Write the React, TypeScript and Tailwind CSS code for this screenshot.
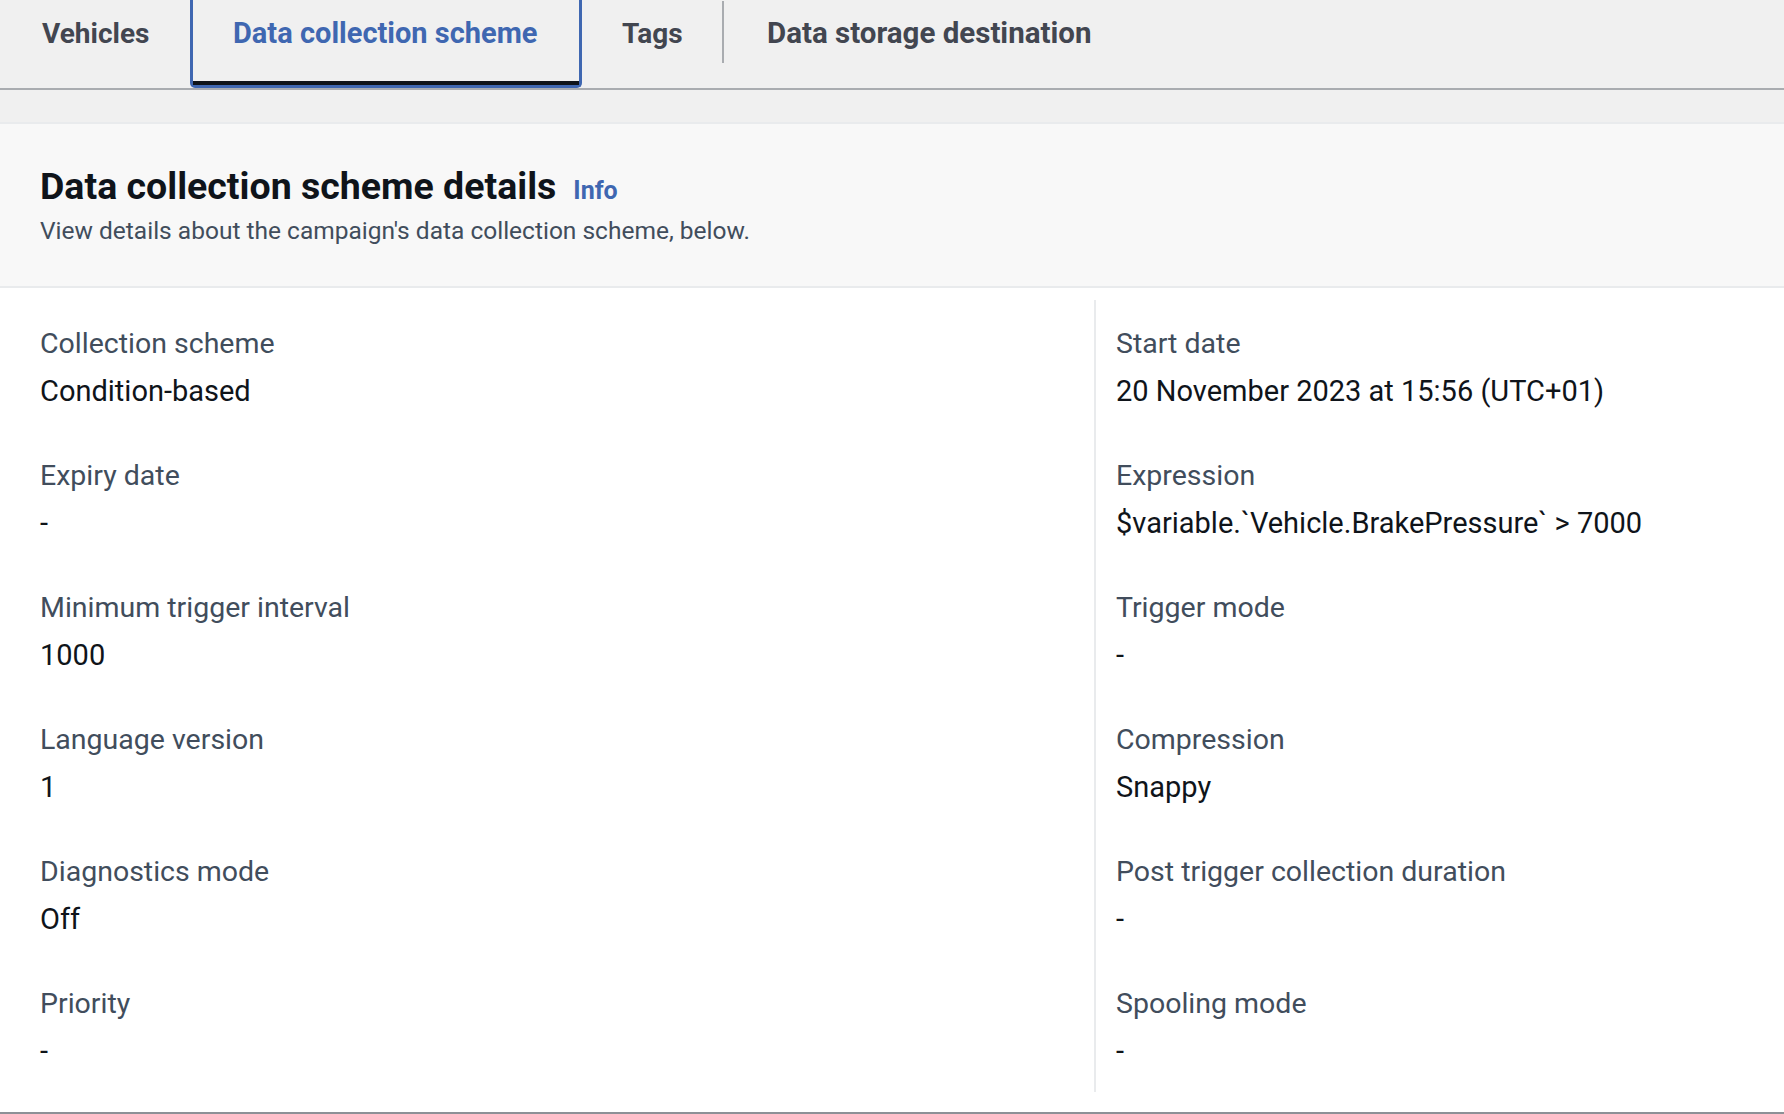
import React from "react";

const left: [string, string][] = [
  ["Collection scheme", "Condition-based"],
  ["Expiry date", "-"],
  ["Minimum trigger interval", "1000"],
  ["Language version", "1"],
  ["Diagnostics mode", "Off"],
  ["Priority", "-"],
];

const right: [string, string][] = [
  ["Start date", "20 November 2023 at 15:56 (UTC+01)"],
  ["Expression", "$variable.`Vehicle.BrakePressure` > 7000"],
  ["Trigger mode", "-"],
  ["Compression", "Snappy"],
  ["Post trigger collection duration", "-"],
  ["Spooling mode", "-"],
];

function Pair({ label, value }: { label: string; value: string }) {
  return (
    <div className="flex flex-col">
      <div className="h-[40px] leading-[40px] text-[28.5px] text-[#414d5c] whitespace-nowrap">{label}</div>
      <div className="mt-[7px] h-[40px] leading-[40px] text-[29px] text-[#0f141a] whitespace-nowrap">{value}</div>
    </div>
  );
}

export default function App() {
  return (
    <div
      className="w-[1784px] h-[1114px] bg-white overflow-hidden"
      style={{ fontFamily: "Roboto, 'Noto Sans', sans-serif" }}
    >
      {/* Tabs */}
      <div className="h-[90px] bg-[#f0f0f0] border-b-2 border-[#a9acb0] flex items-start">
        <div className="w-[190px] h-[67px] pl-[42px] flex items-center text-[28px] font-bold text-[#424650] whitespace-nowrap">
          Vehicles
        </div>
        <div className="relative w-[392px] h-[88px] border-[3px] border-t-0 border-[#3f67b1] rounded-b-[5px] px-[40px]">
          <div className="h-[67px] flex items-center text-[29px] font-bold text-[#3f67b1] whitespace-nowrap">
            Data collection scheme
          </div>
          <div className="absolute left-0 right-0 bottom-0 h-[4px] bg-[#0f141a]" />
        </div>
        <div className="w-[140px] h-[67px] pl-[40px] flex items-center text-[28px] font-bold text-[#424650] whitespace-nowrap">
          Tags
        </div>
        <div className="w-[2px] h-[62px] mt-[1px] bg-[#a9acb0]" />
        <div className="h-[67px] pl-[43px] flex items-center text-[29.5px] font-bold text-[#424650] whitespace-nowrap">
          Data storage destination
        </div>
      </div>

      <div className="h-[34px] bg-[#f0f0f0] border-b-2 border-[#e9ebed]" />

      {/* Header */}
      <div className="h-[164px] bg-[#f8f8f8] border-b-2 border-[#e9ebed] pl-[40px] pt-[42px]">
        <div className="flex items-baseline h-[40px] leading-[40px]">
          <span className="text-[37.5px] font-bold text-[#0f141a] whitespace-nowrap">Data collection scheme details</span>
          <span className="ml-[17px] text-[25px] font-bold text-[#3f67b1]">Info</span>
        </div>
        <div className="mt-[9px] h-[32px] leading-[32px] text-[24.5px] text-[#414d5c] whitespace-nowrap">
          View details about the campaign's data collection scheme, below.
        </div>
      </div>

      {/* Body */}
      <div className="border-b-2 border-[#8d9096] pt-[12px] pb-[20px]">
        <div className="flex">
          <div className="w-[1094px] pl-[40px] pt-[24px] pb-[21px] flex flex-col gap-[45px]">
            {left.map(([l, v]) => (
              <Pair key={l} label={l} value={v} />
            ))}
          </div>
          <div className="flex-1 border-l-2 border-[#e9ebed] pl-[20px] pt-[24px] pb-[21px] flex flex-col gap-[45px]">
            {right.map(([l, v]) => (
              <Pair key={l} label={l} value={v} />
            ))}
          </div>
        </div>
      </div>
    </div>
  );
}
